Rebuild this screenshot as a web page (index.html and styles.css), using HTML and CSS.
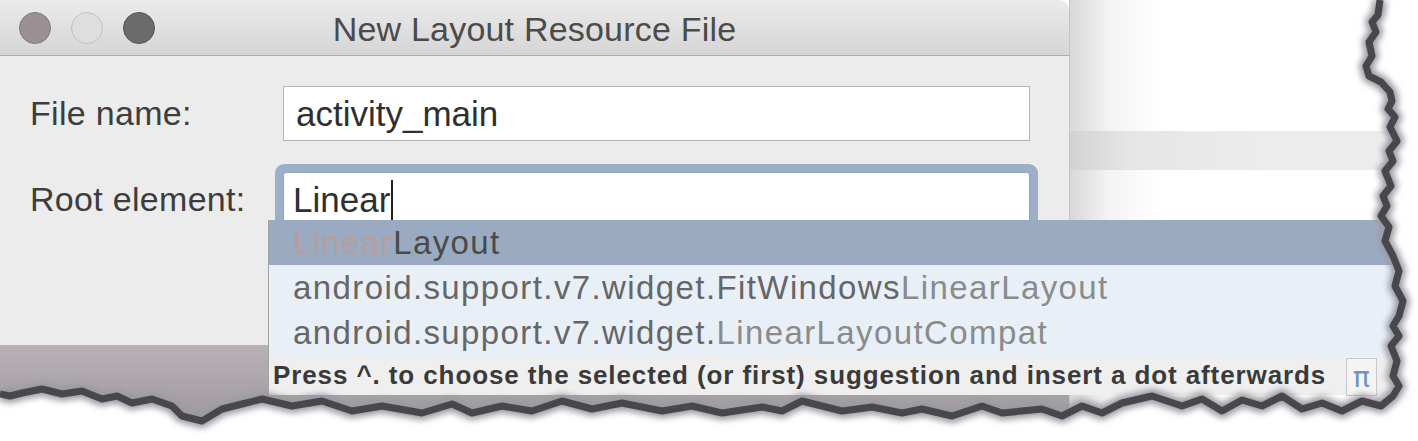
FILE: index.html
```html
<!DOCTYPE html>
<html>
<head>
<meta charset="utf-8">
<link rel="stylesheet" href="styles.css">
</head>
<body>
<div class="page">
  <div class="window">
    <div class="titlebar">
      <div class="lights">
        <span class="light l1"></span>
        <span class="light l2"></span>
        <span class="light l3"></span>
      </div>
      <div class="title">New Layout Resource File</div>
      <div></div>
    </div>
    <div class="content">
      <div class="row">
        <div class="label">File name:</div>
        <div class="field">activity_main</div>
      </div>
      <div class="row">
        <div class="label">Root element:</div>
        <div class="field focus">Linear<span class="caret"></span></div>
      </div>
    </div>
    <div class="under"></div>
  </div>
  <div class="side">
    <div class="band"></div>
  </div>

  <div class="popup">
    <div class="item selected"><span class="match">Linear</span>Layout</div>
    <div class="item">android.support.v7.widget.FitWindows<span class="match">LinearLayout</span></div>
    <div class="item">android.support.v7.widget.<span class="match">LinearLayoutCompat</span></div>
    <div class="footer">
      <span class="hint">Press ^. to choose the selected (or first) suggestion and insert a dot afterwards</span>
      <span class="pi">π</span>
    </div>
  </div>

  <svg class="tear" width="1418" height="441" viewBox="0 0 1418 441">
    <defs>
      <filter id="soft" x="-5%" y="-5%" width="110%" height="110%">
        <feGaussianBlur stdDeviation="3"/>
      </filter>
    </defs>
    <path class="tear-fill" d="M1380 0 L1378 15 L1372 22 L1376 32 L1369 42 L1372 56 L1366 66 L1369 76 L1381 82 L1390 92 L1392 101 L1388 109 L1395 117 L1390 127 L1397 141 L1389 151 L1393 161 L1385 171 L1391 186 L1383 196 L1387 206 L1381 216 L1389 227 L1385 241 L1393 256 L1399 271 L1395 286 L1403 301 L1399 316 L1393 326 L1399 336 L1391 346 L1397 361 L1393 376 L1399 386 L1393 396 L1381 406 L1362 401 L1342 411 L1322 403 L1302 409 L1282 396 L1262 406 L1242 400 L1222 411 L1202 399 L1182 406 L1152 396 L1122 403 L1102 413 L1082 406 L1062 416 L1042 409 L1002 413 L982 406 L952 416 L922 409 L902 413 L872 407 L842 411 L802 401 L782 411 L762 407 L722 413 L692 406 L662 411 L622 403 L592 409 L562 401 L532 411 L502 406 L472 413 L452 404 L422 413 L382 406 L352 411 L322 401 L292 406 L262 399 L242 404 L222 409 L202 421 L182 416 L172 406 L152 399 L132 403 L117 396 L102 399 L82 391 L62 394 L42 389 L22 393 L10 396 L0 394 L0 441 L1418 441 L1418 0 Z"/>
    <path class="tear-shadow" filter="url(#soft)" d="M1380 0 L1378 15 L1372 22 L1376 32 L1369 42 L1372 56 L1366 66 L1369 76 L1381 82 L1390 92 L1392 101 L1388 109 L1395 117 L1390 127 L1397 141 L1389 151 L1393 161 L1385 171 L1391 186 L1383 196 L1387 206 L1381 216 L1389 227 L1385 241 L1393 256 L1399 271 L1395 286 L1403 301 L1399 316 L1393 326 L1399 336 L1391 346 L1397 361 L1393 376 L1399 386 L1393 396 L1381 406 L1362 401 L1342 411 L1322 403 L1302 409 L1282 396 L1262 406 L1242 400 L1222 411 L1202 399 L1182 406 L1152 396 L1122 403 L1102 413 L1082 406 L1062 416 L1042 409 L1002 413 L982 406 L952 416 L922 409 L902 413 L872 407 L842 411 L802 401 L782 411 L762 407 L722 413 L692 406 L662 411 L622 403 L592 409 L562 401 L532 411 L502 406 L472 413 L452 404 L422 413 L382 406 L352 411 L322 401 L292 406 L262 399 L242 404 L222 409 L202 421 L182 416 L172 406 L152 399 L132 403 L117 396 L102 399 L82 391 L62 394 L42 389 L22 393 L10 396 L0 394"/>
    <path class="tear-line" d="M1380 0 L1378 15 L1372 22 L1376 32 L1369 42 L1372 56 L1366 66 L1369 76 L1381 82 L1390 92 L1392 101 L1388 109 L1395 117 L1390 127 L1397 141 L1389 151 L1393 161 L1385 171 L1391 186 L1383 196 L1387 206 L1381 216 L1389 227 L1385 241 L1393 256 L1399 271 L1395 286 L1403 301 L1399 316 L1393 326 L1399 336 L1391 346 L1397 361 L1393 376 L1399 386 L1393 396 L1381 406 L1362 401 L1342 411 L1322 403 L1302 409 L1282 396 L1262 406 L1242 400 L1222 411 L1202 399 L1182 406 L1152 396 L1122 403 L1102 413 L1082 406 L1062 416 L1042 409 L1002 413 L982 406 L952 416 L922 409 L902 413 L872 407 L842 411 L802 401 L782 411 L762 407 L722 413 L692 406 L662 411 L622 403 L592 409 L562 401 L532 411 L502 406 L472 413 L452 404 L422 413 L382 406 L352 411 L322 401 L292 406 L262 399 L242 404 L222 409 L202 421 L182 416 L172 406 L152 399 L132 403 L117 396 L102 399 L82 391 L62 394 L42 389 L22 393 L10 396 L0 394"/>
  </svg>
</div>
</body>
</html>
```

FILE: styles.css
```css
* { box-sizing: border-box; }

html, body {
  margin: 0;
  padding: 0;
  background: #ffffff;
}

.page {
  position: relative;
  width: 1418px;
  height: 441px;
  overflow: hidden;
  display: flex;
  font-family: "Liberation Sans", Arial, sans-serif;
}

.window {
  width: 1070px;
  flex: none;
  display: flex;
  flex-direction: column;
  border-right: 1px solid #c4c4c4;
}

.titlebar {
  height: 56px;
  display: grid;
  grid-template-columns: 1fr auto 1fr;
  align-items: center;
  background: linear-gradient(#ebebeb, #d5d5d5);
  border-bottom: 1px solid #adadad;
  border-top-right-radius: 10px;
}

.lights {
  display: flex;
  gap: 20px;
  padding-left: 19px;
}

.light {
  width: 32px;
  height: 32px;
  border-radius: 50%;
}
.l1 { background: #9b9195; border: 1px solid #82797d; }
.l2 { background: #dedede; border: 1px solid #c2c2c2; }
.l3 { background: #6b6b6b; border: 1px solid #545454; }

.title {
  font-size: 34px;
  letter-spacing: 0.2px;
  color: #4b4b4b;
  padding-top: 4px;
}

.content {
  height: 289px;
  background: #ececec;
  padding: 30px 0 0 30px;
  display: flex;
  flex-direction: column;
  gap: 31px;
}

.row {
  display: flex;
  align-items: center;
}

.label {
  width: 253px;
  font-size: 34px;
  letter-spacing: 0.3px;
  color: #3d3d3d;
}

.field {
  width: 747px;
  height: 55px;
  background: #ffffff;
  border: 1px solid #b4b4b4;
  font-size: 35px;
  color: #2f2f2f;
  padding-left: 12px;
  display: flex;
  align-items: center;
}

.field.focus {
  border: 1px solid #8fa4be;
  box-shadow: 0 0 0 8px #9cafc6;
  border-radius: 3px;
  padding-left: 9px;
}

.caret {
  display: inline-block;
  width: 2px;
  height: 40px;
  background: #222;
  margin-left: 1px;
}

.under {
  flex: 1;
  background: linear-gradient(#b8b2b6, #a59fa3 60%, #9c9699);
}

.side {
  flex: 1;
  padding-top: 131px;
  background: linear-gradient(90deg, #d8d8d8, #f4f4f4 40px, #ffffff 90px);
}

.band {
  height: 39px;
  background: linear-gradient(90deg, #d2d2d2, #e6e6e6 60px, #ececec 200px, #ececec);
}

.popup {
  position: absolute;
  left: 268px;
  top: 220px;
  width: 1132px;
  display: flex;
  flex-direction: column;
  border-left: 1px solid #a2a2a2;
  background: #e9eff7;
}

.item {
  height: 45px;
  display: flex;
  align-items: center;
  padding-left: 24px;
  font-size: 33px;
  letter-spacing: 1.4px;
  color: #666666;
  white-space: nowrap;
}

.item .match { color: #8b8b8b; }

.item.selected {
  background: #9aabc1;
  color: #4a4a4a;
}
.item.selected .match { color: #b79d9d; }

.footer {
  height: 40px;
  background: #efefef;
  display: flex;
  align-items: center;
  padding-left: 4px;
}

.hint {
  font-size: 26px;
  font-weight: bold;
  letter-spacing: 0.9px;
  color: #3a3a3a;
  white-space: nowrap;
  width: 1073px;
  overflow: hidden;
}

.pi {
  width: 31px;
  height: 38px;
  border: 1px solid #c8c8c8;
  background: #f4f4f4;
  color: #6f95bf;
  font-family: "DejaVu Sans", sans-serif;
  font-size: 28px;
  display: flex;
  align-items: center;
  justify-content: center;
  margin-top: 4px;
}

.tear {
  position: absolute;
  left: 0;
  top: 0;
  pointer-events: none;
}

.tear-fill { fill: #ffffff; }
.tear-shadow { fill: none; stroke: #9a9aa2; stroke-width: 14; stroke-linejoin: round; }
.tear-line { fill: none; stroke: #48474c; stroke-width: 7; stroke-linejoin: round; }
```
